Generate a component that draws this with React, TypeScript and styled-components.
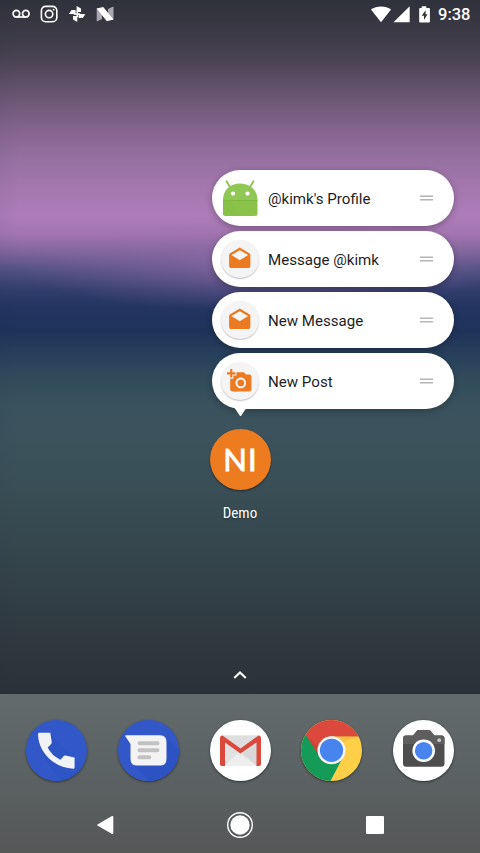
import React from 'react';
import styled, { createGlobalStyle } from 'styled-components';

const GlobalStyle = createGlobalStyle`
  *, *::before, *::after { box-sizing: border-box; }
  html, body { margin: 0; padding: 0; }
  body { font-family: Roboto, 'Liberation Sans', sans-serif; overflow: hidden; }
  svg { display: block; flex: none; }
`;

const Screen = styled.main`
  width: 480px;
  height: 853px;
  display: flex;
  flex-direction: column;
  overflow: hidden;
  color: #fff;
  background:
    linear-gradient(90deg, rgba(20, 30, 60, 0.04), transparent 4%),
    radial-gradient(ellipse 240px 46px at 260px 266px, rgba(158, 112, 174, 0.6), rgba(150, 108, 170, 0.3) 50%, transparent),
    linear-gradient(
      180deg,
      #2f313b 0, #3c3a46 35px, #4b4455 62px, #66536f 92px, #80628a 124px,
      #9570a0 158px, #a678b0 192px, #ad7cb8 215px, #a376b0 234px, #7d649a 253px,
      #505082 271px, #323e6d 289px, #223460 308px, #1f335a 331px, #273f5b 354px,
      #314b5b 378px, #3a525d 406px, #3c535d 430px, #3a5058 470px, #374a51 520px,
      #34434a 570px, #303b42 620px, #2e363c 660px, #292f37 710px
    );
`;

const StatusBar = styled.header`
  height: 28px;
  flex: none;
  display: flex;
  align-items: center;
  justify-content: space-between;
  padding: 0 9px 0 12px;
`;

const Notifications = styled.div`
  display: flex;
  align-items: center;
  gap: 10px;
`;

const SystemIcons = styled.div`
  display: flex;
  align-items: center;
`;

const Clock = styled.time`
  width: 33px;
  margin-left: 7px;
  padding-top: 2px;
  font-size: 16.5px;
  font-weight: 500;
  line-height: 20px;
  white-space: nowrap;
`;

const Shortcuts = styled.section`
  position: relative;
  width: 242.5px;
  margin: 142px 0 0 211.5px;
  display: flex;
  flex-direction: column;
  gap: 4.8px;
`;

const Pointer = styled.svg`
  position: absolute;
  left: 22px;
  top: 237px;
`;

const Shortcut = styled.div`
  height: 56.2px;
  flex: none;
  display: flex;
  align-items: center;
  padding: 0 21px 0 9.5px;
  border-radius: 28px;
  background: #fff;
  box-shadow: 0 2px 7px rgba(0, 0, 0, 0.28);
`;

const ShortcutLabel = styled.span`
  flex: 1;
  margin-left: 9px;
  padding-top: 1px;
  color: #1e1e1e;
  font-size: 15.1px;
  line-height: 20px;
  white-space: nowrap;
`;

const ShortcutBadge = styled.div`
  width: 38px;
  height: 38px;
  display: flex;
  align-items: center;
  justify-content: center;
  border-radius: 50%;
  background: #f4f4f4;
  box-shadow: 0 1px 1.5px rgba(0, 0, 0, 0.25);
`;

const Handle = styled.svg`
  width: 13px;
  height: 6px;
`;

const DemoApp = styled.section`
  margin-top: 20px;
  display: flex;
  flex-direction: column;
  align-items: center;
`;

const DemoIcon = styled.div`
  width: 61px;
  height: 61px;
  display: flex;
  align-items: center;
  justify-content: center;
  border-radius: 50%;
  background: #ed7b20;
  box-shadow: 0 1px 2px rgba(0, 0, 0, 0.45);
  font-family: Lato, sans-serif;
  font-size: 31px;
  font-weight: 400;
  -webkit-text-stroke: 0.9px #fff;
  letter-spacing: 1px;
  padding: 0 0 2px 1px;
  line-height: 40px;
`;

const DemoLabel = styled.span`
  margin-top: 13px;
  font-size: 15px;
  line-height: 20px;
  font-stretch: condensed;
  text-shadow: 0 1px 2px rgba(0, 0, 0, 0.4);
`;

const DrawerHint = styled.div`
  flex: 1;
  display: flex;
  justify-content: center;
  align-items: flex-end;
  padding-bottom: 14px;
`;

const Bottom = styled.footer`
  height: 159px;
  flex: none;
  display: flex;
  flex-direction: column;
  background: linear-gradient(#626a6c, #5c6365 45%, #565757);
`;

const Dock = styled.div`
  display: grid;
  grid-template-columns: repeat(5, 61px);
  gap: 30.9px;
  justify-content: center;
  padding-top: 25.5px;
`;

const DockIcon = styled.svg`
  border-radius: 50%;
  overflow: hidden;
  box-shadow: 0 1px 2.5px rgba(0, 0, 0, 0.5);
`;

const NavBar = styled.nav`
  display: grid;
  grid-template-columns: repeat(3, 135px);
  justify-content: center;
  justify-items: center;
  align-items: center;
  height: 28px;
  margin-top: 30px;
`;

const ORANGE = '#eb7a20';

const AndroidIcon = () => (
  <svg width="38" height="38" viewBox="0 0 38 38">
    <path d="M5.500 2.200 9 8M32.500 2.200 29 8" stroke="#8bc34a" strokeWidth="1.800" strokeLinecap="round" />
    <path d="M2 21C2 11 9 4.500 19 4.500S36.500 11 36.500 21Z" fill="#91c855" />
    <path d="M2 21H36.500V34.500Q36.500 37 34 37H4.500Q2 37 2 34.500Z" fill="#8bc34a" />
    <path d="M2 21H36.500V21.700H2Z" fill="#7db43f" />
    <path d="M2 22H9L20 37H4.500Q2 37 2 34.500Z" fill="#84bc45" opacity=".35" />
    <circle cx="12" cy="14.600" r="2.100" fill="#fff" />
    <circle cx="26.500" cy="14.600" r="2.100" fill="#fff" />
  </svg>
);

const MailIcon = () => (
  <svg width="25.500" height="25.500" viewBox="0 0 24 24">
    <path
      fill={ORANGE}
      d="M21.990 8.500c0-.720-.370-1.350-.940-1.700L12 1.500 2.950 6.800C2.380 7.150 2 7.780 2 8.500v10.300c0 1.100.900 2 2 2h16c1.100 0 2-.900 2-2l-.010-10.300zM12 13.500 4.100 8.500 12 3.900l7.900 4.600L12 13.500z"
    />
  </svg>
);

const AddPhotoIcon = () => (
  <svg width="25.500" height="25.500" viewBox="0 0 24 24">
    <path
      fill={ORANGE}
      d="M3 4V1h2v3h3v2H5v3H3V6H0V4h3zm3 6V7h3V4h7l1.830 2H21c1.100 0 2 .900 2 2v12c0 1.100-.900 2-2 2H5c-1.100 0-2-.900-2-2V10h3zm7 9c2.760 0 5-2.240 5-5s-2.240-5-5-5-5 2.240-5 5 2.240 5 5 5zm-3.200-5c0 1.770 1.430 3.200 3.200 3.200s3.200-1.430 3.200-3.200-1.430-3.200-3.200-3.200-3.200 1.430-3.200 3.200z"
    />
  </svg>
);

const shortcuts = [
  { label: "@kimk's Profile", icon: <AndroidIcon /> },
  { label: 'Message @kimk', icon: <ShortcutBadge><MailIcon /></ShortcutBadge> },
  { label: 'New Message', icon: <ShortcutBadge><MailIcon /></ShortcutBadge> },
  { label: 'New Post', icon: <ShortcutBadge><AddPhotoIcon /></ShortcutBadge> },
];

const NotificationIcons = () => (
  <Notifications>
    <svg width="18" height="18" viewBox="0 0 18 18" fill="none" stroke="#fff" strokeWidth="1.700">
      <circle cx="4.400" cy="8.700" r="3.300" />
      <circle cx="13.800" cy="8.700" r="3.300" />
      <path d="M4.400 12H13.800" />
    </svg>
    <svg width="18" height="18" viewBox="0 0 18 18" fill="none" stroke="#fff" strokeWidth="1.600">
      <rect x="1.400" y="1.400" width="15.400" height="15.400" rx="4.300" />
      <circle cx="9.100" cy="9.100" r="3.700" />
      <circle cx="13.600" cy="4.700" r=".9" fill="#fff" stroke="none" />
    </svg>
    <svg width="18" height="18" viewBox="0 0 18 18" fill="#fff">
      <path d="M8.600 1 13 3.500V7H8.600ZM17.300 9.200 14.800 13H10.600V8.800ZM9.300 17 5 14.500V11H9.300ZM.9 8.900 3.500 5H7.600V9.300Z" />
      <path d="M8.500 6H10V12H8.500ZM6 8.300H12V9.700H6Z" />
    </svg>
    <svg width="18" height="18" viewBox="0 0 18 18">
      <path d="M.7 3.600V16.400L6 14V3ZM17.500 1.600V14.500L12 15V4Z" fill="#aaa7b2" />
      <path d="M.7 3.600 7.200 2 17.500 14.400 10.800 16.300Z" fill="#fff" />
    </svg>
  </Notifications>
);

const SystemStatus = () => (
  <SystemIcons>
    <svg width="60" height="18" viewBox="0 0 60 18" fill="#fff">
      <path d="M0 4.600C5.500.3 14.700.3 20 4.600L10 17.300Z" />
      <path d="M38.700 1.300V17.300H22.500Z" />
      <path
        fillRule="evenodd"
        d="M50.700 1.300H55.300V3H58Q58.900 3 58.900 4V16.400Q58.900 17.400 58 17.400H49Q48.200 17.400 48.200 16.400V4Q48.200 3 49 3H50.700ZM54.600 5.200 50.700 10.800H53V15L56.500 9.300H54.600Z"
      />
    </svg>
    <Clock>9:38</Clock>
  </SystemIcons>
);

const PhoneIcon = () => (
  <DockIcon width="61" height="61" viewBox="0 0 61 61">
    <rect width="61" height="61" fill="#3157c9" />
    <path d="M25 15 57 47Q50 60 34 61L15 33Z" fill="#294fbd" opacity=".25" />
    <path
      d="M13 12.800H24.300L25.800 22.500Q25.900 24 21.700 27.500Q25.500 35.500 34.500 39.700L38 35.800Q38.600 35.300 39.500 35.500L48.600 37.500V47.500Q48.600 48.700 47.300 48.700C28 48 12 32 12 14Q12 12.800 13 12.800Z"
      fill="#f1f2f5"
    />
  </DockIcon>
);

const MessagesIcon = () => (
  <DockIcon width="61" height="61" viewBox="0 0 61 61">
    <rect width="61" height="61" fill="#3157c9" />
    <path d="M47 17 61 30V61H31L15 44Z" fill="#294fbd" opacity=".55" />
    <path
      d="M8 15.300H42Q48.500 15.300 48.500 22V39Q48.500 45.500 42 45.500H19Q12.500 45.500 12.500 39V24L7.300 16.300Q7 15.300 8 15.300Z"
      fill="#f3f3f3"
    />
    <path d="M21.500 23.300H39.500M21.500 30.200H39.500M21.500 37.200H31.300" stroke="#c2c2c2" strokeWidth="4" strokeLinecap="round" />
  </DockIcon>
);

const GmailIcon = () => (
  <DockIcon width="61" height="61" viewBox="0 0 61 61">
    <rect width="61" height="61" fill="#fff" />
    <rect x="10" y="15.500" width="41" height="30.500" rx="2" fill="#e2e2e2" />
    <path d="M14 46 30.500 31 47 46Z" fill="#eeeeee" />
    <path d="M14 21 30.500 35 49 22V45L47 46Z" fill="#cecece" opacity=".5" />
    <path d="M12 15.500H49L30.500 28.500Z" fill="#dedede" />
    <path
      d="M10 18.500Q10 15.500 12.500 15.500L30.500 28.400 48.500 15.500Q51 15.500 51 18.500V44Q51 46 49 46H46.500V22.400L30.500 33.500 15 22.400V46H12Q10 46 10 44Z"
      fill="#db483c"
    />
  </DockIcon>
);

const ChromeIcon = () => (
  <DockIcon width="61" height="61" viewBox="0 0 61 61">
    <rect width="61" height="61" fill="#ffcf48" />
    <path d="M0 7.500V61H29.500L42 37 18 34Z" fill="#139b57" />
    <path d="M0 7V0H61V16.500H30.500L18 36Z" fill="#dc483b" />
    <path d="M5 15.500 18 36V27Z" fill="#a43b34" opacity=".3" />
    <path d="M33 16.500H57L42 22Z" fill="#e6a72e" opacity=".3" />
    <circle cx="30.500" cy="30.300" r="14" fill="#f5f5f5" />
    <circle cx="30.500" cy="30.300" r="11.600" fill="#4784ee" />
  </DockIcon>
);

const CameraIcon = () => (
  <DockIcon width="61" height="61" viewBox="0 0 61 61">
    <rect width="61" height="61" fill="#fff" />
    <path
      d="M13 15.500H20L24.200 10.600Q25 10 26 10H35.500Q36.500 10 37.200 10.600L41.500 15.500H48.500Q51.500 15.500 51.500 18.500V43.700Q51.500 46.700 48.500 46.700H13Q10 46.700 10 43.700V18.500Q10 15.500 13 15.500Z"
      fill="#4e4e4e"
    />
    <path d="M13 15.500H20L24.200 10.600Q25 10 26 10H35.500Q36.500 10 37.200 10.600L41.500 15.500H48.500Q51.500 15.500 51.500 18.500V24H10V18.500Q10 15.500 13 15.500Z" fill="#5e5e5e" />
    <circle cx="46.200" cy="20.200" r="1.900" fill="#c7c7c7" />
    <circle cx="30.700" cy="30.700" r="11.300" fill="#fff" />
    <circle cx="30.700" cy="30.700" r="8.800" fill="#4784ee" />
  </DockIcon>
);

export default function App() {
  return (
    <>
      <GlobalStyle />
      <Screen>
        <StatusBar>
          <NotificationIcons />
          <SystemStatus />
        </StatusBar>
        <Shortcuts>
          {shortcuts.map(({ label, icon }) => (
            <Shortcut key={label}>
              {icon}
              <ShortcutLabel>{label}</ShortcutLabel>
              <Handle viewBox="0 0 13 6">
                <path d="M0 1.200H13M0 4.800H13" stroke="#b4b4b4" strokeWidth="1.600" />
              </Handle>
            </Shortcut>
          ))}
          <Pointer width="13" height="10" viewBox="0 0 13 10">
            <path d="M0 0H13L7.300 8.400Q6.500 9.500 5.700 8.400Z" fill="#fff" />
          </Pointer>
        </Shortcuts>
        <DemoApp>
          <DemoIcon>NI</DemoIcon>
          <DemoLabel>Demo</DemoLabel>
        </DemoApp>
        <DrawerHint>
          <svg width="14" height="10" viewBox="0 0 14 10">
            <path d="M1.200 8 7 2.500 12.800 8" fill="none" stroke="#fff" strokeWidth="2.100" />
          </svg>
        </DrawerHint>
        <Bottom>
          <Dock>
            <PhoneIcon />
            <MessagesIcon />
            <GmailIcon />
            <ChromeIcon />
            <CameraIcon />
          </Dock>
          <NavBar>
            <svg width="18" height="20" viewBox="0 0 18 20">
              <path d="M1.500 9.500 16 1Q17.300.5 17.300 2V18Q17.300 19.500 16 19L1.500 10.500Q.5 10 1.500 9.500Z" fill="#fff" />
            </svg>
            <svg width="26" height="26" viewBox="0 0 26 26">
              <circle cx="13" cy="13" r="12.300" fill="none" stroke="#fff" strokeWidth="1.400" />
              <circle cx="13" cy="13" r="9.700" fill="#fff" />
            </svg>
            <svg width="18" height="18" viewBox="0 0 18 18">
              <rect width="18" height="18" rx="1" fill="#fff" />
            </svg>
          </NavBar>
        </Bottom>
      </Screen>
    </>
  );
}
